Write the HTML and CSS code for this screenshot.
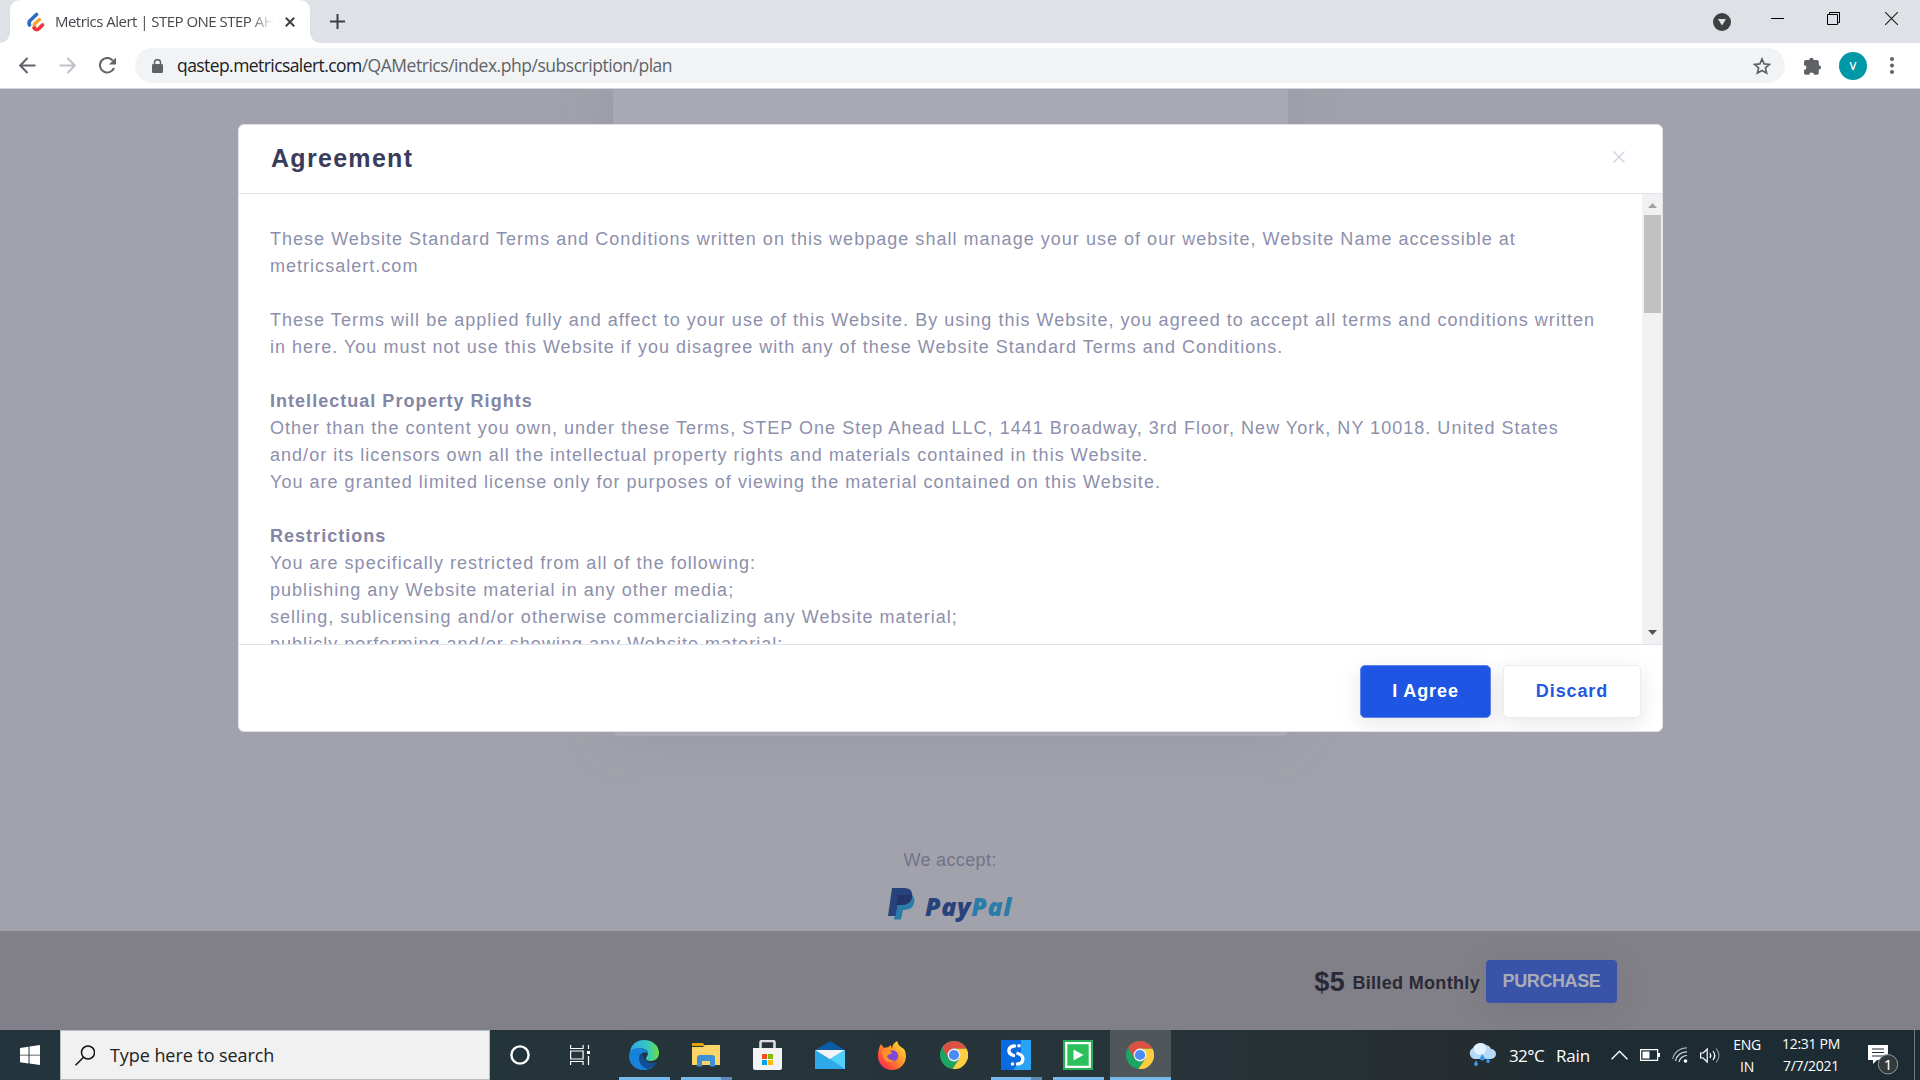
FILE: index.html
```html
<!DOCTYPE html>
<html lang="en">
<head>
<meta charset="utf-8">
<title>Metrics Alert | STEP ONE STEP AHEAD</title>
<link rel="stylesheet" href="styles.css">
</head>
<body>
<svg class="defs" width="0" height="0">
  <symbol id="chrome" viewBox="0 0 28 28">
    <circle cx="14" cy="14" r="14" fill="#1da462"/>
    <path d="M14 7.500H26.400A14 14 0 0 1 12.500 28L19.500 17.500Z" fill="#ffcd40"/>
    <path d="M2.200 6.500A14 14 0 0 1 26.400 7.500H14L8.500 17.500Z" fill="#dd5144"/>
    <circle cx="14" cy="14" r="6.400" fill="#f1f1f1"/>
    <circle cx="14" cy="14" r="5.100" fill="#4c8bf5"/>
  </symbol>
</svg>

<header class="browser">
  <div class="tabstrip">
    <div class="tab">
      <svg class="favicon" width="18" height="20" viewBox="0 0 18 20"><g fill="none" stroke-linecap="round"><path d="M9.500 2.500L3.200 8.500Q1.300 10.500 2.500 13" stroke="#2d6cc4" stroke-width="3.600"/><path d="M12.500 7.500L8 11.500Q6.500 13 8 14.500" stroke="#fba02b" stroke-width="3.200"/><path d="M7 15.800Q9.500 19 12 16.500L15.500 13" stroke="#f0323f" stroke-width="3.600"/></g></svg>
      <span class="tab-title">Metrics Alert | STEP ONE STEP AHEAD</span>
      <svg class="tab-close" width="10" height="10" viewBox="0 0 10 10"><path d="M.8.8l8.400 8.400M9.200.8L.8 9.200" stroke="#3c4043" stroke-width="2"/></svg>
    </div>
    <svg class="new-tab" width="15" height="15" viewBox="0 0 15 15"><path d="M7.500 0v15M0 7.500h15" stroke="#3c4043" stroke-width="2"/></svg>
    <div class="window-controls">
      <svg width="18" height="18" viewBox="0 0 18 18"><circle cx="9" cy="9" r="9" fill="#3c4043"/><path d="M5 6h8l-4 6.500z" fill="#dee1e6"/></svg>
      <svg width="13" height="13" viewBox="0 0 13 13"><path d="M0 6.500h13" stroke="#000"/></svg>
      <svg width="13" height="13" viewBox="0 0 13 13"><path d="M.5 2.500h10v10H.5zM2.500 2.500v-2h10v10h-2" fill="none" stroke="#000"/></svg>
      <svg width="13" height="13" viewBox="0 0 13 13"><path d="M0 0l13 13M13 0L0 13" stroke="#222" stroke-width="1.200"/></svg>
    </div>
  </div>
  <div class="toolbar">
    <svg class="nav" width="17" height="17" viewBox="0 0 17 17"><path d="M16.500 8.500H1.500M8.500 1L1.200 8.500l7.300 7.500" stroke="#5f6368" stroke-width="2" fill="none"/></svg>
    <svg class="nav" width="17" height="17" viewBox="0 0 17 17"><path d="M.5 8.500h15M8.500 1l7.300 7.500L8.500 16" stroke="#bdc1c6" stroke-width="2" fill="none"/></svg>
    <svg class="nav" width="17" height="17" viewBox="0 0 17 17"><path d="M15 11A7.300 7.300 0 1 1 13.800 3.500" stroke="#5f6368" stroke-width="2" fill="none"/><path d="M17 .5v7h-7z" fill="#5f6368"/></svg>
    <div class="omnibox">
      <svg class="lock" width="11" height="14" viewBox="0 0 11 14"><rect y="5" width="11" height="9" rx="1.300" fill="#5f6368"/><path d="M2.500 6V3.500a3 2.800 0 0 1 6 0V6" stroke="#5f6368" stroke-width="1.500" fill="none"/></svg>
      <span class="url"><b>qastep.metricsalert.com</b>/QAMetrics/index.php/subscription/plan</span>
      <svg class="star" width="18" height="18" viewBox="0 0 18 18"><path d="M9 2l2.100 4.900 5.300.5-4 3.500 1.200 5.200L9 13.400l-4.600 2.700 1.200-5.200-4-3.500 5.300-.5z" fill="none" stroke="#5f6368" stroke-width="1.700"/></svg>
    </div>
    <svg class="puzzle" width="18" height="18" viewBox="0 0 18 18"><path d="M1.800 3H5.200a2.200 2.200 0 0 1 4.400 0H13q1.800 0 1.800 1.800V8.200a2.200 2.200 0 0 1 0 4.400V16q0 1.800-1.800 1.800H10a2.400 2.400 0 0 0-4.800 0H1.800Q0 17.800 0 16V13a2.400 2.400 0 0 0 0-4.800V4.800Q0 3 1.800 3z" fill="#5f6368"/></svg>
    <span class="avatar">V</span>
    <svg class="kebab" width="4" height="17" viewBox="0 0 4 17"><g fill="#5f6368"><circle cx="2" cy="2" r="2"/><circle cx="2" cy="8.500" r="2"/><circle cx="2" cy="15" r="2"/></g></svg>
  </div>
</header>

<main class="page">
  <div class="plan-card"></div>
  <section class="accept">
    <p>We accept:</p>
    <div class="paypal">
      <svg width="28" height="33" viewBox="0 0 28 33"><path d="M10 8h13c3 1 4 4 3 8-1 5-5 7-11 7l-2 9.500H6z" fill="#2a7da9"/><path d="M4 1h12c7 0 9 4 8 9s-5 8-11 8H9.500L7.500 29H0z" fill="#28427c"/><path d="M10 8h14.300c0 6-4 10-11.300 10H8.300z" fill="#25346a"/></svg>
      <span class="paypal-name">Pay<i>Pal</i></span>
    </div>
  </section>
  <footer class="billing">
    <strong class="price">$5</strong>
    <span class="cycle">Billed Monthly</span>
    <button class="purchase">PURCHASE</button>
  </footer>

  <div class="modal">
    <div class="modal-header">
      <h5>Agreement</h5>
      <svg width="12" height="12" viewBox="0 0 12 12"><path d="M.5.5l11 11M11.500.5l-11 11" stroke="#ccd0d9" stroke-width="1.300"/></svg>
    </div>
    <div class="modal-body">
      <div class="terms">
        <p>These Website Standard Terms and Conditions written on this webpage shall manage your use of our website, Website Name accessible at<br>metricsalert.com</p>
        <p>These Terms will be applied fully and affect to your use of this Website. By using this Website, you agreed to accept all terms and conditions written<br>in here. You must not use this Website if you disagree with any of these Website Standard Terms and Conditions.</p>
        <p><b>Intellectual Property Rights</b><br>Other than the content you own, under these Terms, STEP One Step Ahead LLC, 1441 Broadway, 3rd Floor, New York, NY 10018. United States<br>and/or its licensors own all the intellectual property rights and materials contained in this Website.<br>You are granted limited license only for purposes of viewing the material contained on this Website.</p>
        <p><b>Restrictions</b><br>You are specifically restricted from all of the following:<br>publishing any Website material in any other media;<br>selling, sublicensing and/or otherwise commercializing any Website material;<br>publicly performing and/or showing any Website material;</p>
      </div>
      <div class="scrollbar">
        <svg width="9" height="5" viewBox="0 0 9 5"><path d="M0 5L4.500 0 9 5z" fill="#a3a3a3"/></svg>
        <div class="thumb"></div>
        <svg class="down" width="9" height="5" viewBox="0 0 9 5"><path d="M0 0h9L4.500 5z" fill="#505050"/></svg>
      </div>
    </div>
    <div class="modal-footer">
      <button class="btn agree">I Agree</button>
      <button class="btn discard">Discard</button>
    </div>
  </div>
</main>

<nav class="taskbar">
  <div class="start"><svg width="20" height="20" viewBox="0 0 20 20"><path d="M0 3l8.500-1.300v8H0zM9.500 1.500L20 0v9.700H9.500zM0 10.500h8.500v8L0 17.200zM9.500 10.500H20V20L9.500 18.500z" fill="#fff"/></svg></div>
  <div class="search">
    <svg width="20" height="21" viewBox="0 0 20 21"><circle cx="13" cy="7.500" r="6.500" fill="none" stroke="#111" stroke-width="1.500"/><path d="M8.500 12.200L.5 20.300" stroke="#111" stroke-width="1.500"/></svg>
    <span>Type here to search</span>
  </div>
  <div class="cell narrow"><svg width="20" height="20" viewBox="0 0 20 20"><circle cx="10" cy="10" r="8.600" fill="none" stroke="#fff" stroke-width="2.400"/></svg></div>
  <div class="cell view"><svg width="21" height="20" viewBox="0 0 21 20"><path d="M.6 0v3.500h12.500V0M.6 20v-3.500h12.500V20M.6 6h12.500v8H.6zM18.500 0v4M18.500 11v9" fill="none" stroke="#fff" stroke-width="1.200"/><path d="M17 6h3v3h-3z" fill="#fff"/></svg></div>
  <div class="cell open"><svg width="30" height="30" viewBox="0 0 30 30">
    <defs><linearGradient id="eg"><stop offset="0" stop-color="#2fa7e6"/><stop offset=".6" stop-color="#36c8c0"/><stop offset="1" stop-color="#6ae044"/></linearGradient></defs>
    <path d="M1 12C2 4 8 0 15 0c9 0 15 6 15 13 0 5-4 8-8 8-4 0-5-1-5-3 0-1 2-2 2-5 0-4-8-7-18-1z" fill="url(#eg)"/><path d="M0 16C0 10 5 8 10 8c6 0 9 3 9 6-3-3-8-1-8 4 0 7 8 9 16 5-3 5-7 7-12 7C6 30 0 24 0 16z" fill="#1683d8"/><path d="M11 14c-3 6 1 14 8 15 4-1 7-4 9-7-5 2-13 1-14-7z" fill="#114e96"/></svg></div>
  <div class="cell open multi"><svg width="28" height="24" viewBox="0 0 28 24"><path d="M0 0h11l2 3H0z" fill="#dfa009"/><path d="M0 4h11l2-2h15v20H0z" fill="#fdd467"/><path d="M5 23.500V15q0-3 3-3h12q3 0 3 3v8.500h-5V18h-8v5.500z" fill="#3f8fd4"/></svg></div>
  <div class="cell store"><svg width="29" height="30" viewBox="0 0 29 30"><path d="M7.500 8V2.500q0-1.500 1.500-1.500h11q1.500 0 1.500 1.500V8" fill="none" stroke="#ddd" stroke-width="2.600"/><path d="M0 8h29v20q0 2-2 2H2q-2 0-2-2z" fill="#f3f3f3"/><path d="M9 14h5v5H9z" fill="#f25022"/><path d="M15 14h5v5h-5z" fill="#7fba00"/><path d="M9 20h5v5H9z" fill="#00a4ef"/><path d="M15 20h5v5h-5z" fill="#ffb900"/></svg></div>
  <div class="cell"><svg class="mail" width="30" height="28" viewBox="0 0 30 28"><path d="M0 9L15 0l15 9v6H0z" fill="#0c59a4"/><path d="M0 9h30L15 20z" fill="#f4f4f4"/><path d="M0 9l15 9 15-9v19H0z" fill="#2fa8e8"/><path d="M2.500 9h25L15 18z" fill="#f4f4f4"/><path d="M15 18l15-9v19z" fill="#50d0fa"/></svg></div>
  <div class="cell"><svg width="28" height="29" viewBox="0 0 28 29">
    <defs><linearGradient id="fx" x1="1" y1="0" x2="0" y2="1"><stop offset="0" stop-color="#ffec3f"/><stop offset=".45" stop-color="#ff9528"/><stop offset=".75" stop-color="#ff4a3d"/><stop offset="1" stop-color="#e6168b"/></linearGradient></defs>
    <path d="M3 3l3 4q2-1 4-.5Q12 4 13 4q0 2 1 4Q14 3 19 0q1 4 4 6l3 2q2 3 2 7c0 8-6 14-14 14S0 23 0 15Q0 8 3 3z" fill="url(#fx)"/><circle cx="14.500" cy="15" r="5.800" fill="#8246d9"/><path d="M4 10c5-2 10 0 10 2-2 2-4 1-5 3 1 4 5 5 8 4-4 4-11 2-12-4z" fill="#ff9528"/></svg></div>
  <div class="cell"><svg width="28" height="28"><use href="#chrome" width="28" height="28"/></svg></div>
  <div class="cell open multi"><svg width="30" height="30" viewBox="0 0 30 30"><path d="M0 0h30v30H0z" fill="#086be0"/><path d="M20 0h10v30H12L20 20z" fill="#2ba3f5"/><path d="M13.500 6C6.500 6.500 6 13.500 12.500 15.500M17 13.500C23.500 15.500 23.500 23.500 16.500 24" fill="none" stroke="#fff" stroke-width="3.400" stroke-linecap="round"/><circle cx="18" cy="5.800" r="1.800" fill="#fff"/><circle cx="11.500" cy="24" r="1.800" fill="#fff"/></svg></div>
  <div class="cell open"><svg width="30" height="30" viewBox="0 0 30 30"><path d="M0 0h30v30H0z" fill="#26b254"/><path d="M3.200 3.200h23.600v23.600H3.200z" fill="#2cc05c" stroke="#fff" stroke-width="2.200"/><path d="M10.500 9.500l10 5.500-10 5.500z" fill="#fff"/></svg></div>
  <div class="cell active"><svg width="28" height="28"><use href="#chrome" width="28" height="28"/></svg></div>

  <div class="tray">
    <svg class="weather" width="28" height="26" viewBox="0 0 28 26"><path d="M6 17a6 6 0 0 1-1-11A8 7 0 0 1 18 3a6 6 0 0 1 5 4 5 5 0 0 1 0 10z" fill="#b5dbf8"/><circle cx="12" cy="7" r="6" fill="#e4f2fd"/><path d="M14 12l3 4a2.500 2.500 0 1 1-5 0zM8 18l2 4a2 2 0 1 1-4 0zM20 16l2 3a2 2 0 1 1-4 0z" fill="#3c97ee"/></svg>
    <span class="temp">32°C</span><span class="rain">Rain</span>
    <svg class="chev" width="17" height="10" viewBox="0 0 17 10"><path d="M.6 9.200L8.500 1.200l7.900 8" fill="none" stroke="#fff" stroke-width="1.400"/></svg>
    <svg class="batt" width="20" height="12" viewBox="0 0 20 12"><path d="M.6.6h17v10.800H.6z" fill="none" stroke="#fff" stroke-width="1.200"/><path d="M2.500 2.500h7v7h-7zM18 4h2v4h-2z" fill="#fff"/></svg>
    <svg class="wifi" width="16" height="16" viewBox="0 0 16 16"><g fill="none" stroke="#dfe4e6" stroke-width="1.200"><path d="M.7 12A14 14 0 0 1 15 .8" opacity=".7"/><path d="M3.500 14A11 11 0 0 1 15 4.800M7 15a8 8 0 0 1 8-6.500"/></g><circle cx="13.500" cy="14" r="1.800" fill="#fff"/></svg>
    <svg class="vol" width="21" height="17" viewBox="0 0 21 17"><g fill="none" stroke="#fff" stroke-width="1.200"><path d="M.6 6h2.600l4-4v13l-4-4H.6z"/><path d="M10 6q1.500 2.500 0 5M13 4q3.500 4.500 0 9"/><path d="M16 1.500q6 7 0 14" opacity=".45"/></g></svg>
    <div class="lang"><span class="eng">ENG</span><span class="in">IN</span></div>
    <div class="clock"><span class="time">12:31 PM</span><span class="date">7/7/2021</span></div>
    <svg class="note" width="32" height="32" viewBox="0 0 32 32"><path d="M0 2h20v15H9l-4 4v-4H0z" fill="#fff"/><path d="M4 6h12M4 9.500h12M4 13h12" stroke="#1d2c33" stroke-width="1.200"/><circle cx="20" cy="21.300" r="9.700" fill="#333a3e" stroke="#8d9497"/><text x="20" y="27" text-anchor="middle" fill="#fff" font-family="Noto Sans, sans-serif" font-size="15">1</text></svg>
    <div class="peek"></div>
  </div>
</nav>
</body>
</html>
```
FILE: styles.css
```css
* { box-sizing: border-box; }
body { margin: 0; width: 1920px; height: 1080px; overflow: hidden; display: flex; flex-direction: column; font-family: "Liberation Sans", Arial, sans-serif; }
svg { display: block; flex: none; }
p, h5 { margin: 0; }
button { font-family: inherit; border: 0; padding: 0; }
.defs { display: none; }

.browser { height: 89px; background: #fff; border-bottom: 1px solid #d3d4dc; font-family: "Open Sans", "Noto Sans", sans-serif; }
.tabstrip { height: 43px; background: #dee1e6; display: flex; align-items: center; }
.tab { position: relative; width: 300px; height: 43px; margin-left: 10px; background: #fff; border-radius: 10px 10px 0 0; display: flex; align-items: center; padding-left: 17px; }
.tab::before, .tab::after { content: ""; position: absolute; bottom: 0; width: 10px; height: 10px; }
.tab::before { left: -10px; background: radial-gradient(circle at 0 0, transparent 9.5px, #fff 10px); }
.tab::after { right: -10px; background: radial-gradient(circle at 100% 0, transparent 9.5px, #fff 10px); }
.favicon { margin-right: 10px; }
.tab-title { width: 218px; height: 24px; line-height: 22px; font-size: 15px; letter-spacing: -.52px; color: #45494d; white-space: nowrap; overflow: hidden; mask-image: linear-gradient(90deg, #000 195px, transparent 218px); }
.tab-close { margin-left: 12px; }
.new-tab { margin-left: 20px; }
.window-controls { margin-left: auto; display: flex; align-items: center; margin-right: 22px; }
.window-controls svg { margin-bottom: 6px; margin-left: 43px; }
.window-controls svg:first-child { margin-bottom: 0; }
.window-controls svg:nth-child(2) { margin-left: 40px; }
.window-controls svg:last-child { margin-left: 45px; }
.toolbar { height: 45px; display: flex; align-items: center; padding-left: 19px; }
.nav { margin-right: 23px; }
.omnibox { width: 1650px; height: 35px; border-radius: 18px; background: #f1f3f4; display: flex; align-items: center; padding: 0 14px 0 17px; margin-left: -4px; }
.url { margin: 0 0 2px 14px; font-size: 17.5px; letter-spacing: -.47px; color: #5f6368; white-space: nowrap; }
.url b { font-weight: 400; letter-spacing: -.57px; color: #202124; }
.star { margin-left: auto; }
.puzzle { margin: 0 0 0 19px; }
.avatar { width: 28px; height: 28px; margin-left: 17px; border-radius: 50%; background: #0097a7; color: #fff; font-size: 11px; font-weight: 600; display: grid; place-items: center; }
.kebab { margin-left: 23px; }

.page { position: relative; height: 941px; background: #a2a2ac; display: flex; flex-direction: column; align-items: center; overflow: hidden; }
.plan-card { width: 675px; height: 647px; margin-right: 19px; background: #a9a9b3; border-radius: 0 0 6px 6px; box-shadow: 0 0 50px rgba(130, 135, 145, .35); }
.accept { height: 195px; margin-right: 20px; padding-top: 113px; display: flex; flex-direction: column; align-items: center; }
.accept p { font-size: 18px; line-height: 22px; letter-spacing: .35px; color: #71738a; }
.paypal { display: flex; margin-top: 16px; }
.paypal-name { margin-left: 9px; font: italic 800 25px/38px "Open Sans", sans-serif; letter-spacing: .6px; color: #28427c; }
.paypal-name i { color: #2a7da9; }
.billing { width: 100%; height: 99px; background: #817f87; display: flex; align-items: center; justify-content: flex-end; padding: 2px 303px 0 0; color: #292a35; }
.price { font-size: 27px; letter-spacing: .5px; margin-top: 2px; }
.cycle { font-size: 18px; font-weight: 700; letter-spacing: .33px; margin: 4px 6px 0 7px; }
.purchase { width: 131px; height: 43px; border-radius: 4px; background: #3853a8; color: #a9abb8; font-weight: 700; font-size: 18px; letter-spacing: -.4px; padding-bottom: 1px; box-shadow: 0 8px 30px rgba(90, 88, 96, .15); }

.modal { position: absolute; left: 238px; top: 35px; width: 1425px; height: 608px; background: #fff; border: 1px solid #dfe2ea; border-radius: 6px; display: flex; flex-direction: column; overflow: hidden; }
.modal-header { height: 69px; flex: none; border-bottom: 1px solid #e0e3ea; padding: 0 37px 2px 32px; display: flex; align-items: center; justify-content: space-between; }
.modal-header h5 { font-size: 25px; letter-spacing: 1.3px; color: #3a3c5c; }
.modal-header svg { margin-bottom: 2px; }
.modal-body { height: 450px; flex: none; display: flex; justify-content: space-between; overflow: hidden; }
.terms { padding: 32px 0 0 31px; font-size: 18px; line-height: 27px; letter-spacing: 1.025px; color: #8d90ac; white-space: nowrap; }
.terms p { margin-bottom: 27px; }
.terms b { color: #8386a4; }
.scrollbar { width: 20px; background: #f1f1f1; display: flex; flex-direction: column; align-items: center; padding: 9px 0; flex: none; }
.thumb { width: 17px; height: 98px; margin-top: 7px; background: #c1c1c1; }
.down { margin-top: auto; }
.modal-footer { flex: 1; border-top: 1px solid #dde3ec; display: flex; align-items: flex-start; justify-content: flex-end; gap: 12px; padding: 20px 21px 0; }
.btn { height: 53px; border-radius: 5px; font-weight: 700; font-size: 18px; letter-spacing: .9px; box-shadow: 0 6px 25px rgba(0, 0, 0, .1); }
.agree { width: 131px; background: #1e55e2; color: #fff; border: 1px solid #5d84ea; }
.discard { width: 138px; background: #fff; color: #2259e2; border: 1px solid #ececee; }

.taskbar { height: 50px; background: linear-gradient(90deg, #23343c, #27343a 60%, #262d30 76%, #1d2c33 82%); display: flex; color: #fff; font-family: "Open Sans", "Noto Sans", sans-serif; }
.start { width: 60px; display: grid; place-items: center; }
.search { width: 430px; background: #f1f1f1; border: 1px solid #b9bcbe; display: flex; align-items: center; padding-left: 14px; color: #222; font-size: 18px; }
.search span { margin-left: 15px; letter-spacing: -.07px; white-space: nowrap; }
.cell { width: 62px; display: flex; align-items: center; justify-content: center; position: relative; }
.narrow { width: 60px; }
.view { width: 63px; padding-right: 2px; }
.store { padding-right: 2px; }
.open { background: linear-gradient(#76b9ed, #76b9ed) 6px 100% / 51px 3px no-repeat; }
.multi { background: linear-gradient(90deg, #76b9ed 40px, #5b89b3 40px) 6px 100% / 51px 3px no-repeat; }
.active { background: linear-gradient(#76b9ed, #76b9ed) 1px 100% / 61px 3px no-repeat, linear-gradient(#50575b, #50575b) 1px 0 / 61px 100% no-repeat; }
.tray { margin-left: auto; width: 452px; display: flex; align-items: center; font-size: 17px; white-space: nowrap; }
.temp { margin-left: 13px; width: 47px; letter-spacing: -.6px; }
.rain { width: 55px; letter-spacing: -.2px; }
.batt { margin-left: 12px; }
.wifi { margin-left: 12px; }
.vol { margin-left: 12px; }
.lang, .clock { display: flex; flex-direction: column; align-items: center; font-size: 14px; line-height: 22px; letter-spacing: -.3px; margin-top: 1px; }
.lang { width: 32px; margin-left: 10px; }
.clock { width: 62px; margin-left: 17px; margin-top: 0; }
.note { margin: 8px 0 0 26px; }
.peek { width: 1px; height: 50px; background: #6d777c; margin-left: 14px; }
```
